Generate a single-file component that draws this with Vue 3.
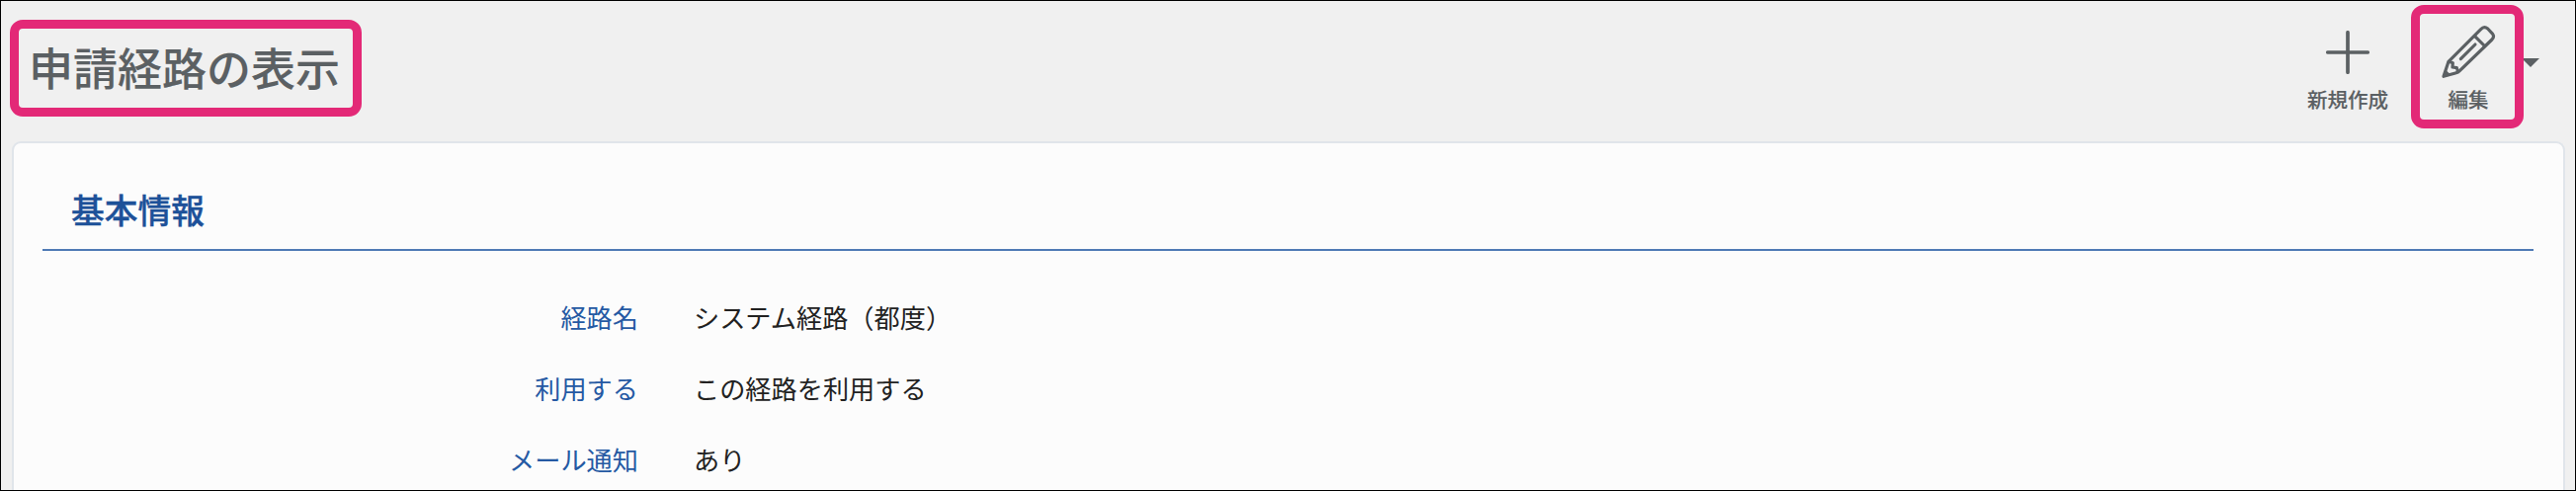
<script setup>
import { ref } from "vue";

const title = "申請経路の表示";
const sectionTitle = "基本情報";

const fields = ref([
  { label: "経路名", value: "システム経路（都度）" },
  { label: "利用する", value: "この経路を利用する" },
  { label: "メール通知", value: "あり" },
]);
</script>

<template>
  <div class="page">
    <header class="page-header">
      <h1 class="page-title marked">{{ title }}</h1>
      <div class="toolbar">
        <button type="button" class="tool tool--new">
          <svg class="icon-plus" viewBox="0 0 44 44" aria-hidden="true">
            <path d="M22 1.8V42.2M1.8 22H42.2" />
          </svg>
          <span>新規作成</span>
        </button>
        <button type="button" class="tool tool--edit marked">
          <svg class="icon-pencil" viewBox="0 0 168 168" aria-hidden="true">
            <path
              d="M9 160L24 115L122 17Q132 6 143 15L158 31Q164 39 156 48L58 143Q53 148 45 150Z"
            />
            <path d="M103 37L132 66" />
            <path d="M61 107L105 63" />
            <path d="M25 115L37 119L36 132L49 134L53 146" />
            <path class="lead" d="M9 160L15 140L29 153Z" />
          </svg>
          <span>編集</span>
        </button>
        <svg class="icon-caret" viewBox="0 0 16 9" aria-hidden="true">
          <path d="M0 0H16L7 9L0 2Z" />
        </svg>
      </div>
    </header>

    <main class="card">
      <h2 class="section-title">{{ sectionTitle }}</h2>
      <dl class="fields">
        <div v-for="field in fields" :key="field.label" class="field">
          <dt>{{ field.label }}</dt>
          <dd>{{ field.value }}</dd>
        </div>
      </dl>
    </main>
  </div>
</template>

<style>
body {
  margin: 0;
  overflow: hidden;
}
</style>

<style scoped>
.page {
  display: flex;
  flex-direction: column;
  box-sizing: border-box;
  width: 100%;
  height: 497px;
  overflow: hidden;
  border: 1px solid #000;
  background: #f0f0f0;
  color: #222;
  font-family: "Noto Sans CJK JP", sans-serif;
}

.page-header {
  display: flex;
  flex: none;
  align-items: flex-start;
  justify-content: space-between;
  box-sizing: border-box;
  height: 142px;
  padding: 4px 36px 0 9px;
}

.marked {
  box-sizing: border-box;
  border: 9px solid #e32977;
  border-radius: 13px;
}

.page-title {
  width: 356px;
  height: 98px;
  margin: 15px 0 0;
  padding-left: 10px;
  color: #5b6063;
  font-size: 45px;
  font-weight: 500;
  line-height: 77px;
  white-space: nowrap;
  -webkit-text-stroke: 0.15px currentColor;
}

.toolbar {
  display: flex;
  align-items: flex-start;
}

.tool {
  display: flex;
  flex-direction: column;
  align-items: center;
  color: #5b6063;
  background: none;
  font-family: inherit;
  font-size: 20.5px;
  font-weight: 500;
  line-height: 30px;
  white-space: nowrap;
  cursor: pointer;
  -webkit-text-stroke: 0.15px currentColor;
}

.tool--new {
  margin-right: 23px;
  padding: 26px 0 0;
  border: 0;
}

.tool--edit {
  width: 114px;
  height: 125px;
  padding: 10px 0 0 2px;
}

.icon-plus {
  width: 44px;
  height: 44px;
  margin-bottom: 10px;
  fill: none;
  stroke: #5b6063;
  stroke-width: 3.7;
  stroke-linecap: round;
}

.icon-pencil {
  width: 56px;
  height: 56px;
  margin-bottom: 5px;
  fill: none;
  stroke: #5b6063;
  stroke-width: 9.5;
  stroke-linecap: round;
  stroke-linejoin: round;
}

.icon-pencil .lead {
  fill: #5b6063;
  stroke: none;
}

.icon-caret {
  width: 16px;
  height: 9px;
  margin-top: 54px;
  fill: #5b6063;
}

.card {
  flex: 1;
  box-sizing: border-box;
  margin: 0 10px 0 11px;
  padding: 42px 30px 0 29px;
  border: 2px solid #e0e5ea;
  border-bottom: 0;
  border-radius: 9px 9px 0 0;
  background: #fcfcfc;
}

.section-title {
  margin: 0;
  padding: 0 0 15px 29px;
  border-bottom: 2px solid #4f7ab5;
  color: #1d5199;
  font-size: 33.75px;
  font-weight: 500;
  line-height: 50px;
  -webkit-text-stroke: 0.35px currentColor;
}

.fields {
  display: grid;
  gap: 32px;
  margin: 46.5px 0 0;
}

.field {
  display: grid;
  grid-template-columns: 603px 1fr;
  column-gap: 56px;
  font-size: 26.2px;
  line-height: 40.4px;
}

.field dt {
  color: #2559a3;
  text-align: right;
}

.field dd {
  margin: 0;
}
</style>
